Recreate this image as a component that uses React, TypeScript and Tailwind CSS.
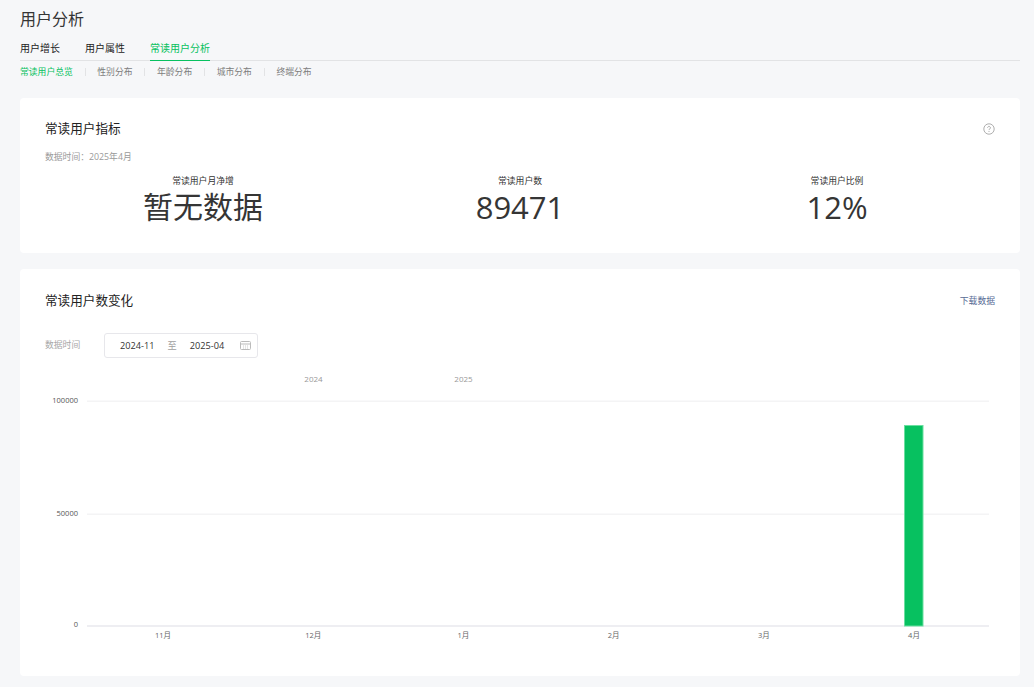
const font = { fontFamily: '"Open Sans", "Noto Sans CJK SC", sans-serif' };

const tabs = ["用户增长", "用户属性", "常读用户分析"];
const subs = ["常读用户总览", "性别分布", "年龄分布", "城市分布", "终端分布"];
const metrics = [
  { label: "常读用户月净增", value: "暂无数据", cls: "w-[366px]", size: "text-[30px]" },
  { label: "常读用户数", value: "89471", cls: "w-[268px]", size: "text-[31px]" },
  { label: "常读用户比例", value: "12%", cls: "w-[366px]", size: "text-[31px]" },
];
const months = ["11月", "12月", "1月", "2月", "3月", "4月"];

function Chart() {
  return (
    <svg width="950" height="274" viewBox="0 0 950 274" className="block" style={font}>
      <text x="268.5" y="10" fontSize="8" fill="#999" textAnchor="middle">2024</text>
      <text x="418.5" y="10" fontSize="8" fill="#999" textAnchor="middle">2025</text>
      <line x1="42" x2="944" y1="29.2" y2="29.2" stroke="#f4f4f5" strokeWidth="1.5" />
      <line x1="42" x2="944" y1="142.2" y2="142.2" stroke="#f4f4f5" strokeWidth="1.5" />
      <line x1="42" x2="944" y1="254" y2="254" stroke="#e8e9ee" strokeWidth="1.6" />
      <text x="33" y="31" fontSize="7.5" fill="#555" textAnchor="end">100000</text>
      <text x="33" y="143.5" fontSize="7.5" fill="#555" textAnchor="end">50000</text>
      <text x="33" y="255" fontSize="7.5" fill="#555" textAnchor="end">0</text>
      <rect x="859.5" y="53.5" width="18.5" height="200.5" fill="#07c160" stroke="#6adfa0" />
      {months.map((m, i) => (
        <text key={m} x={118 + i * 150.2} y="266" fontSize="7.5" fill="#666" textAnchor="middle">{m}</text>
      ))}
    </svg>
  );
}

export default function App() {
  return (
    <div className="h-[687px] w-[1034px] overflow-hidden bg-[#f6f7f9] pl-5 pr-[14px] pt-[8px] text-[#353535]" style={font}>
      <h1 className="text-[16px] leading-[22px] font-normal">用户分析</h1>
      <div className="mt-[8px] flex gap-[25px] border-b border-[#e2e3e5] text-[10px] leading-[20px]">
        {tabs.map((t, i) => (
          <div key={t} className={i === 2 ? "-mb-px border-b border-[#07c160] pb-[2px] text-[#07c160]" : "pb-[2px] text-[#222]"}>{t}</div>
        ))}
      </div>
      <div className="mt-[5px] flex items-center text-[8.8px] leading-[12px] text-[#7d7d7d]">
        {subs.map((s, i) => (
          <div key={s} className="flex items-center">
            {i > 0 && <span className="mx-[11.75px] h-[8px] w-px bg-[#e2e3e5]" />}
            <span className={i === 0 ? "text-[#07c160]" : ""}>{s}</span>
          </div>
        ))}
      </div>

      <section className="mt-5 h-[155px] rounded-[4px] bg-white px-[25px] pt-[21px]">
        <div className="flex items-center justify-between">
          <h2 className="text-[12.6px] leading-[20px] font-normal text-[#222]">常读用户指标</h2>
          <svg width="12" height="12" viewBox="0 0 12 12" fill="none">
            <circle cx="6" cy="6" r="5.2" stroke="#999" strokeWidth="0.8" />
            <path d="M4.6 4.7a1.4 1.4 0 1 1 2.2 1.2c-.5.3-.8.6-.8 1.2" stroke="#999" strokeWidth="0.8" />
            <circle cx="6" cy="8.6" r="0.5" fill="#999" />
          </svg>
        </div>
        <div className="mt-[12px] text-[8.8px] leading-[12px] text-[#9a9a9a]">数据时间：2025年4月</div>
        <div className="-mx-[25px] mt-[12px] flex">
          {metrics.map((m) => (
            <div key={m.label} className={`${m.cls} flex flex-col items-center`}>
              <div className="text-[8.8px] leading-[12px] text-[#333]">{m.label}</div>
              <div className={`${m.size} leading-[40px] text-[#353535]`}>{m.value}</div>
            </div>
          ))}
        </div>
      </section>

      <section className="mt-4 h-[407px] rounded-[4px] bg-white px-[25px] pt-[21px]">
        <div className="flex items-center justify-between">
          <h2 className="text-[12.6px] leading-[20px] font-normal text-[#222]">常读用户数变化</h2>
          <span className="text-[8.8px] leading-[22px] text-[#576b95]">下载数据</span>
        </div>
        <div className="mt-[21px] flex items-center">
          <span className="w-[59px] text-[8.8px] text-[#a8a8a8]">数据时间</span>
          <div className="flex h-[25px] w-[154px] items-center rounded-[3px] border border-[#e7e7eb] pl-[15px] text-[9.2px] text-[#333]">
            <span>2024-11</span>
            <span className="mx-[13px] text-[#a0a0a0]">至</span>
            <span>2025-04</span>
            <svg width="11" height="9" viewBox="0 0 11 9" fill="none" className="ml-[16px]">
              <rect x="0.5" y="0.5" width="10" height="8" rx="1" stroke="#bbb" />
              <path d="M1 3h9" stroke="#bbb" />
              <path d="M3 5h1M5 5h1M7 5h1M3 7h1M5 7h1M7 7h1" stroke="#ccc" />
            </svg>
          </div>
        </div>
        <div className="mt-[14px]">
          <Chart />
        </div>
      </section>
    </div>
  );
}
